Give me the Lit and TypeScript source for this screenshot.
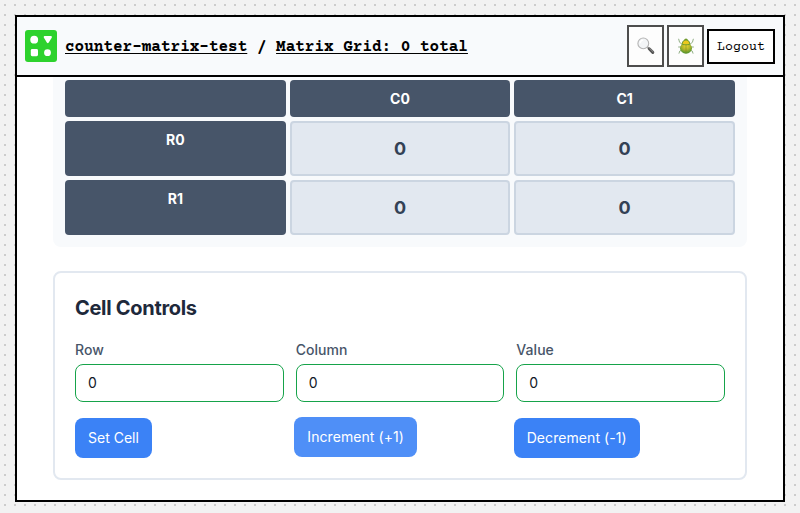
import { LitElement, html, css, svg } from "lit";
import { customElement } from "lit/decorators.js";

@customElement("app-root")
export class AppRoot extends LitElement {
  static styles = css`
    :host {
      display: block;
      box-sizing: border-box;
      height: 513px;
      padding: 15px 15px 11px;
      overflow: hidden;
      background: #f2f2f2;
      font-family: Inter, "Liberation Sans", sans-serif;
      position: relative;
    }
    * { box-sizing: border-box; }
    .dots { position: absolute; left: 0; top: 0; }
    .window {
      position: relative;
      height: 487px;
      border: 2px solid #000;
      background: #fff;
      display: flex;
      flex-direction: column;
      overflow: hidden;
    }
    header {
      flex: none;
      height: 60px;
      border-bottom: 2px solid #000;
      background: #f8fafc;
      display: flex;
      align-items: center;
      padding: 0 8px;
      gap: 3px;
      font-family: "Courier Prime", Courier, "Courier New", "Liberation Mono", monospace;
    }
    .logo { margin-right: 5px; flex: none; }
    .crumbs { flex: 1; font-size: 16px; line-height: 20px; font-weight: 700; white-space: pre; color: #000; padding-top: 1px; }
    .crumbs a { text-decoration: underline; text-decoration-thickness: 1px; text-underline-offset: 2px; }
    .tool { width: 37px; height: 42px; border: 2px solid #4d4d4d; background: #fdfdfd; display: grid; place-items: center; padding: 0; }
    .logout { width: 68px; height: 35px; border: 2px solid #000; background: #fff; padding: 3px 0 0; font: 13.333px "Courier Prime", Courier, "Courier New", "Liberation Mono", monospace; color: #000; }
    main { padding: 0 36px; }
    .matrix {
      background: #f8fafc;
      border-radius: 0 0 8px 8px;
      padding: 3px 12px 12px;
      display: grid;
      grid-template-columns: repeat(3, 1fr);
      grid-template-rows: 37px 55px 55px;
      gap: 4px;
    }
    .head { background: #475569; border-radius: 4px; color: #fff; font-size: 14px; font-weight: 650; line-height: 21px; text-align: center; padding-top: 8px; }
    .cell { background: #e2e8f0; border: 2px solid #cbd5e1; border-radius: 4px; color: #334155; font-size: 18px; font-weight: 650; display: grid; place-items: center; }
    .card { margin-top: 24px; height: 209px; border: 2px solid #e2e8f0; border-radius: 8px; padding: 20px; }
    h3 { margin: 0; font-size: 20px; line-height: 30px; font-weight: 650; letter-spacing: -0.3px; color: #1e293b; }
    .fields { margin-top: 17px; display: grid; grid-template-columns: repeat(3, 1fr); gap: 12px; }
    label { display: block; font-size: 14px; line-height: 19px; font-weight: 500; letter-spacing: 0.05px; color: #475569; }
    input { display: block; margin-top: 5px; width: 100%; height: 38px; border: 1px solid #16a34a; border-radius: 8px; padding: 0 12px 2px; font: 14px Inter, sans-serif; color: #111827; background: #fff; outline: none; }
    .actions { margin-top: 16px; display: grid; grid-template-columns: repeat(3, 1fr); gap: 8px; justify-items: start; }
    .btn { height: 40px; border: 0; border-radius: 8px; padding: 0 13px 2px; background: #3b82f6; color: #fff; font: 14px Inter, sans-serif; letter-spacing: 0.07px; white-space: nowrap; }
    .btn:first-child { letter-spacing: 0; }
    .btn.hover { background: #4f8ff7; transform: translateY(-1px); }
  `;

  private logo = svg`<rect width="32" height="32" rx="3" fill="#2dd22d"/>
    <circle cx="9.2" cy="9.7" r="3.9" fill="#fff"/>
    <path d="M19.4 6h6.8q1.2.5.5 1.8l-3.1 5q-.8.8-1.6 0l-3.1-5q-.7-1.3.5-1.8z" fill="#fff"/>
    <rect x="5.8" y="19" width="7.2" height="7.2" rx="1.4" fill="#fff"/>
    <circle cx="22.5" cy="22.7" r="3.4" fill="#fff"/>`;

  render() {
    return html`
      <svg class="dots" width="800" height="513" shape-rendering="crispEdges">
        <defs><pattern id="dot" width="10" height="10" patternUnits="userSpaceOnUse"><rect x="4" y="4" width="2" height="2" fill="#ccc"/></pattern></defs>
        <rect width="800" height="513" fill="url(#dot)"/>
      </svg>
      <div class="window">
        <header>
          <svg class="logo" width="32" height="32" viewBox="0 0 32 32">${this.logo}</svg>
          <div class="crumbs"><a>counter-matrix-test</a> / <a>Matrix Grid: 0 total</a></div>
          <button class="tool" aria-label="Search">
            <svg width="18" height="18" viewBox="0 0 18 18">
              <path d="M10.4 10.2l2 1.8" stroke="#999" stroke-width="1.6"/>
              <path d="M12.2 11.8l3.6 3.6" stroke="#555" stroke-width="3" stroke-linecap="round"/>
              <path d="M12.6 11.4l3.4 3.3" stroke="#999" stroke-width=".8" stroke-linecap="round"/>
              <circle cx="6.3" cy="6.4" r="5.4" fill="#f3f5f7" stroke="#b4b4b4" stroke-width="1.1"/>
              <path d="M3.2 6.2q.3-2.7 2.9-3" fill="none" stroke="#fff" stroke-width="1.2"/>
            </svg>
          </button>
          <button class="tool" aria-label="Debug">
            <svg width="18" height="18" viewBox="0 0 18 18">
              <defs>
                <radialGradient id="shell" cx=".5" cy=".3" r=".65">
                  <stop offset="0" stop-color="#e9d532"/><stop offset=".5" stop-color="#b3b62b"/><stop offset="1" stop-color="#55952f"/>
                </radialGradient>
              </defs>
              <path d="M5 7.5L2.5 5 1.6 1.8M13 7.5L15.5 5l.9-3.2M4.5 10H1.2M13.5 10h3.3M4.8 13l-2 1-.9 2.6M13.2 13l2 1 .9 2.6" fill="none" stroke="#86a678" stroke-width=".9"/>
              <ellipse cx="9" cy="11.3" rx="6" ry="5.4" fill="url(#shell)"/>
              <path d="M9 8v8.2" stroke="#7d8c22" stroke-width=".6"/>
              <path d="M4.4 7.5Q4.8 4 7 3q.5-1.5 2-1.5T11 3q2.2 1 2.6 4.5Q9 9 4.4 7.5z" fill="#719b2e"/>
              <path d="M5.6 6.8Q6.2 3.4 9 3.4t3.4 3.4Q9 7.8 5.6 6.8z" fill="#ecc81e"/>
            </svg>
          </button>
          <button class="logout">Logout</button>
        </header>
        <main>
          <section class="matrix">
            <div class="head"></div><div class="head">C0</div><div class="head">C1</div>
            ${[0, 1].map((r) => html`<div class="head">R${r}</div><div class="cell">0</div><div class="cell">0</div>`)}
          </section>
          <section class="card">
            <h3>Cell Controls</h3>
            <div class="fields">
              ${["Row", "Column", "Value"].map((n) => html`<label>${n}<input .value=${"0"} /></label>`)}
            </div>
            <div class="actions">
              <button class="btn">Set Cell</button>
              <button class="btn hover">Increment (+1)</button>
              <button class="btn">Decrement (-1)</button>
            </div>
          </section>
        </main>
      </div>
    `;
  }
}
